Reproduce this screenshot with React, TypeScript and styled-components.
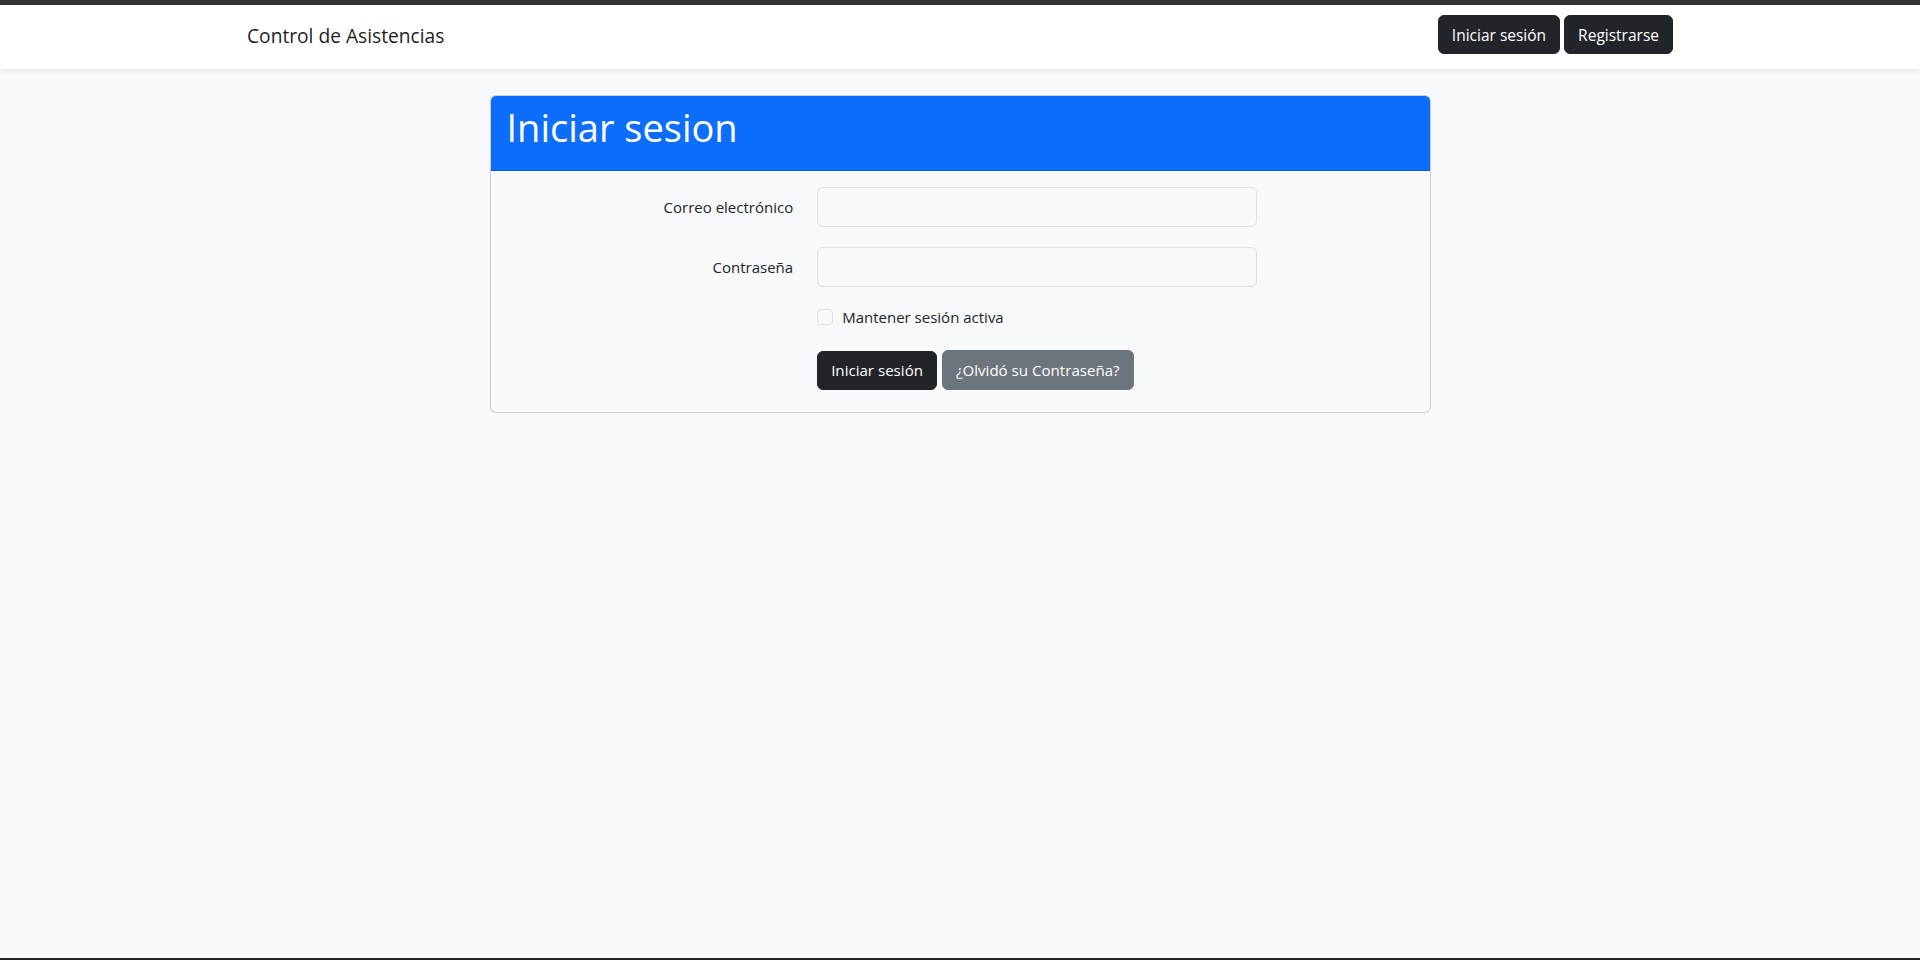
import React from "react";
import styled, { createGlobalStyle } from "styled-components";

const GlobalStyle = createGlobalStyle`
  html, body { margin: 0; padding: 0; }
  body {
    background: #f8f9fa;
    font-family: "Open Sans", "Noto Sans", sans-serif;
    color: #212529;
  }
  * { box-sizing: border-box; }
`;

const Page = styled.div`
  height: 960px;
  display: flex;
  flex-direction: column;
  background: #f8f9fa;
`;

const TopStrip = styled.div`
  height: 5px;
  background: #333333;
  flex: none;
`;

const Navbar = styled.nav`
  height: 64px;
  background: #ffffff;
  box-shadow: 0 2px 4px rgba(0, 0, 0, 0.075);
  flex: none;
  position: relative;
  z-index: 1;
`;

const NavContainer = styled.div`
  width: 1426px;
  height: 100%;
  margin: 0 auto;
  display: flex;
  align-items: center;
  justify-content: space-between;
`;

const Brand = styled.a`
  font-size: 19.2px;
  color: rgba(0, 0, 0, 0.9);
  text-decoration: none;
  margin-top: -3px;
`;

const NavActions = styled.div`
  display: flex;
  gap: 4px;
  margin-top: -5px;
`;

const Button = styled.button<{ $variant?: "dark" | "secondary"; $size?: number }>`
  height: ${(p) => (p.$variant === "secondary" ? "40px" : "39px")};
  padding: 0 13px;
  border: 1px solid ${(p) => (p.$variant === "secondary" ? "#6c757d" : "#212529")};
  background: ${(p) => (p.$variant === "secondary" ? "#6c757d" : "#212529")};
  color: #ffffff;
  border-radius: 6px;
  font-family: inherit;
  font-size: ${(p) => p.$size ?? 15.5}px;
  cursor: pointer;
`;

const Main = styled.main`
  flex: 1;
  padding-top: 26px;
`;

const Card = styled.section`
  width: 941px;
  margin: 0 auto;
  border: 1px solid rgba(0, 0, 0, 0.175);
  border-radius: 6px;
  background: #f8f9fa;
  overflow: hidden;
`;

const CardHeader = styled.header`
  height: 75px;
  background: #0d6efd;
  border-bottom: 1px solid #0b5ed7;
  padding: 0 16px 12px;
  display: flex;
  align-items: center;
`;

const Title = styled.h1`
  margin: 0;
  color: #ffffff;
  font-size: 38px;
  font-weight: 400;
  line-height: 1;
`;

const CardBody = styled.div`
  padding: 16px 16px 22px;
  display: flex;
  flex-direction: column;
`;

const Row = styled.div<{ $gap?: number; $height?: number }>`
  display: grid;
  grid-template-columns: 310.67px 464px;
  align-items: center;
  margin-top: ${(p) => p.$gap ?? 0}px;
  height: ${(p) => p.$height ?? 40}px;
  margin-left: -12px;
`;

const Label = styled.label`
  padding: 0 12px;
  text-align: right;
  font-size: 15px;
  color: #212529;
`;

const Field = styled.div`
  grid-column: 2;
  padding: 0 12px;
  display: flex;
  align-items: center;
  gap: 5px;
`;

const Input = styled.input`
  width: 100%;
  height: 40px;
  border: 1px solid #dee2e6;
  border-radius: 6px;
  background: #f8f9fa;
  padding: 6px 12px;
  font-family: inherit;
  font-size: 15px;
`;

const CheckLabel = styled.label`
  display: flex;
  align-items: center;
  gap: 9px;
  font-size: 15px;
  color: #212529;
`;

const CheckBox = styled.span`
  width: 16px;
  height: 16px;
  border: 1px solid #dee2e6;
  border-radius: 4px;
  background: #f8f9fa;
  display: inline-block;
`;

const BottomStrip = styled.div`
  height: 2px;
  background: #202124;
  flex: none;
`;

export default function App() {
  return (
    <>
      <GlobalStyle />
      <Page>
        <TopStrip />
        <Navbar>
          <NavContainer>
            <Brand href="#">Control de Asistencias</Brand>
            <NavActions>
              <Button $variant="dark">Iniciar sesión</Button>
              <Button $variant="dark">Registrarse</Button>
            </NavActions>
          </NavContainer>
        </Navbar>
        <Main>
          <Card>
            <CardHeader>
              <Title>Iniciar sesion</Title>
            </CardHeader>
            <CardBody>
              <Row>
                <Label htmlFor="email">Correo electrónico</Label>
                <Field>
                  <Input id="email" type="email" />
                </Field>
              </Row>
              <Row $gap={20}>
                <Label htmlFor="password">Contraseña</Label>
                <Field>
                  <Input id="password" type="password" />
                </Field>
              </Row>
              <Row $gap={18} $height={23}>
                <Field>
                  <CheckLabel>
                    <CheckBox />
                    Mantener sesión activa
                  </CheckLabel>
                </Field>
              </Row>
              <Row $gap={22}>
                <Field>
                  <Button $variant="dark" $size={15.1}>Iniciar sesión</Button>
                  <Button $variant="secondary" $size={15.1}>¿Olvidó su Contraseña?</Button>
                </Field>
              </Row>
            </CardBody>
          </Card>
        </Main>
        <BottomStrip />
      </Page>
    </>
  );
}
